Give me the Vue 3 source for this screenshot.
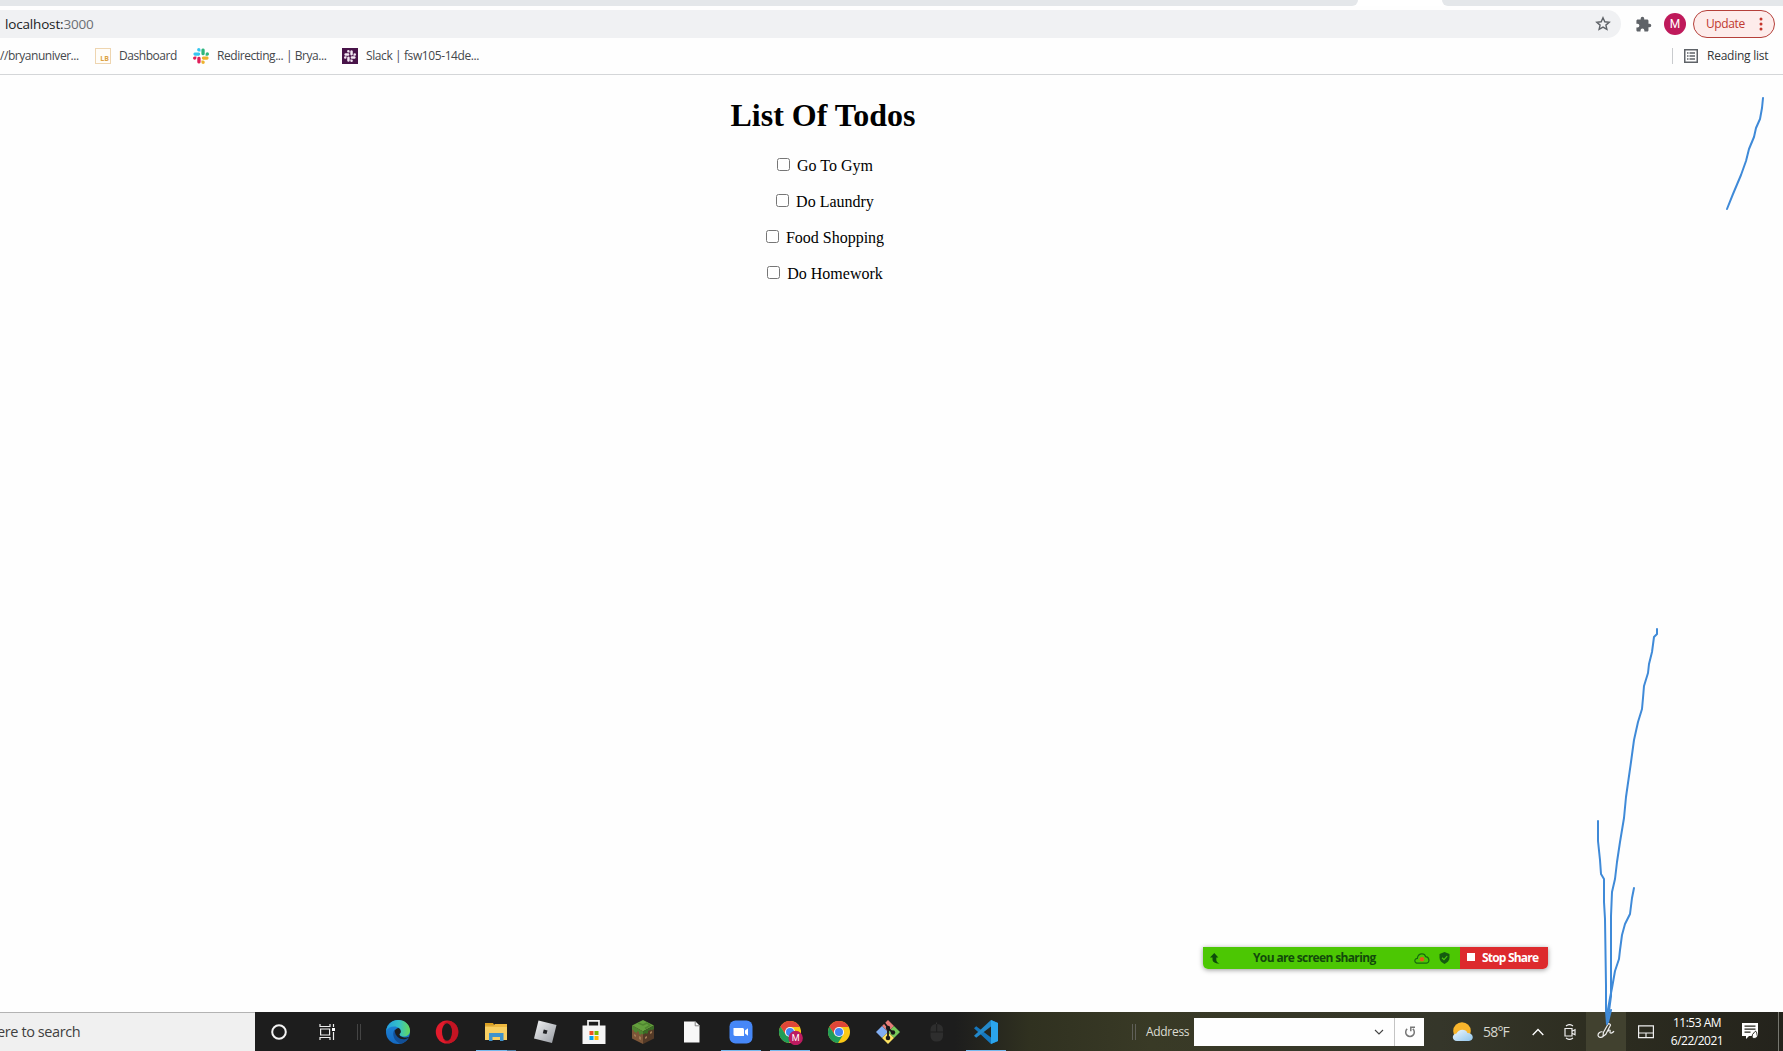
<script setup>
const todos = ['Go To Gym', 'Do Laundry', 'Food Shopping', 'Do Homework']

const apps = [
  { name: 'edge' },
  { name: 'opera' },
  { name: 'explorer', open: true },
  { name: 'roblox' },
  { name: 'store' },
  { name: 'minecraft' },
  { name: 'file' },
  { name: 'zoom', open: true },
  { name: 'chrome-profile', open: true },
  { name: 'chrome' },
  { name: 'git' },
  { name: 'mouse' },
  { name: 'vscode', open: true }
]

const slackShapes = [
  { c: 'a', d: 'M5.8 0a1.7 1.7 0 0 0 0 3.4h1.7V1.7A1.7 1.7 0 0 0 5.8 0zM1.7 4.4h4.2a1.7 1.7 0 0 1 0 3.3H1.7a1.7 1.7 0 0 1 0-3.3z' },
  { c: 'b', d: 'M16 5.9a1.7 1.7 0 0 0-3.4 0v1.8h1.7A1.7 1.7 0 0 0 16 5.9zM11.7 1.7v4.2a1.7 1.7 0 0 1-3.3 0V1.7a1.7 1.7 0 0 1 3.3 0z' },
  { c: 'c', d: 'M10.1 16a1.7 1.7 0 0 0 0-3.4H8.4v1.7A1.7 1.7 0 0 0 10.1 16zM14.3 11.7h-4.2a1.7 1.7 0 0 1 0-3.3h4.2a1.7 1.7 0 0 1 0 3.3z' },
  { c: 'd', d: 'M0 10.1a1.7 1.7 0 0 0 3.4 0V8.4H1.7A1.7 1.7 0 0 0 0 10.1zM4.3 14.3v-4.2a1.7 1.7 0 0 1 3.3 0v4.2a1.7 1.7 0 0 1-3.3 0z' }
]
</script>

<template>
  <div class="screen">
    <div class="tabstrip">
      <div class="tab-rest left"></div>
      <div class="tab-rest right"></div>
    </div>

    <div class="toolbar">
      <div class="omnibox">
        <span class="url">localhost:<span class="port">3000</span></span>
        <svg class="star" width="16" height="16" viewBox="0 0 16 16"><path d="M8 1.8l1.8 4 4.4.4-3.3 2.9 1 4.3L8 11.1l-3.9 2.3 1-4.3-3.3-2.9 4.4-.4z" fill="none" stroke="#5f6368" stroke-width="1.4" /></svg>
      </div>
      <svg class="puzzle" width="17" height="17" viewBox="0 0 24 24"><path fill="#5f6368" d="M20.5 11H19V7c0-1.100-.9-2-2-2h-4V3.500a2.500 2.500 0 0 0-5 0V5H4c-1.100 0-2 .9-2 2v3.800h1.500a2.700 2.700 0 0 1 0 5.400H2V20c0 1.100.9 2 2 2h3.800v-1.500a2.700 2.700 0 0 1 5.400 0V22H17c1.100 0 2-.9 2-2v-4h1.500a2.500 2.500 0 0 0 0-5z" /></svg>
      <div class="avatar">M</div>
      <div class="update"><span>Update</span>
        <svg width="4" height="14" viewBox="0 0 4 14" fill="#c5352b"><circle cx="2" cy="2" r="1.5" /><circle cx="2" cy="7" r="1.500" /><circle cx="2" cy="12" r="1.500" /></svg>
      </div>
    </div>

    <div class="bookmarks">
      <span class="bm b0">//bryanuniver...</span>
      <span class="lb">LB</span>
      <span class="bm b1">Dashboard</span>
      <svg class="slack" width="16" height="16" viewBox="0 0 16 16"><path v-for="s in slackShapes" :key="s.c" :class="'s-' + s.c" :d="s.d" /></svg>
      <span class="bm b2">Redirecting... | Brya...</span>
      <svg class="slack" width="16" height="16" viewBox="0 0 16 16"><path fill="#481349" d="M0 0h16v16H0z" /><g transform="translate(2 2) scale(.75)" fill="#f3e8f3"><path v-for="s in slackShapes" :key="s.c" :d="s.d" /></g></svg>
      <span class="bm b3">Slack | fsw105-14de...</span>
      <div class="reading">
        <svg width="14" height="14" viewBox="0 0 14 14"><path d="M.75.75h12.500v12.500H.75z" fill="none" stroke="#5f6368" stroke-width="1.500" /><path d="M3 4h1.500M3 7h1.500M3 10h1.500M5.500 4H11M5.500 7H11M5.500 10H11" stroke="#5f6368" stroke-width="1.400" /></svg>
        <span>Reading list</span>
      </div>
    </div>

    <main class="page">
      <h1>List Of Todos</h1>
      <div v-for="t in todos" :key="t" class="todo"><input type="checkbox" /> {{ t }}</div>
    </main>

    <div class="share">
      <div class="share-main">
        <svg class="up" width="11" height="11" viewBox="0 0 11 11"><path d="M4.300 0L0 4.500h2.500v1.800C2.500 9 4.500 10.500 9.500 10.500 7 9.500 6.300 8.300 6.300 6.500v-2h2z" fill="#0d4d0a" /></svg>
        <span class="share-text">You are screen sharing</span>
        <svg class="cloud" width="16" height="11" viewBox="0 0 16 11"><path d="M4 10.200C-.3 10.400.1 5.300 3.400 5.300 4 .1 10.400-.6 11.600 3.700c3.800 0 4.600 6.100.9 6.500z" fill="none" stroke="#176a10" stroke-width="1.200" /><circle cx="8" cy="6.200" r="2.300" fill="#e05a1c" /></svg>
        <svg class="shield" width="11" height="12" viewBox="0 0 11 12"><path d="M5.500 0l5 1.900v3.600c0 3.100-2.200 5.200-5 6.500-2.800-1.300-5-3.400-5-6.500V1.900z" fill="#155b10" /><path d="M3 5.800l2 1.900 3.200-3.500" fill="none" stroke="#4cc70a" stroke-width="1.200" /></svg>
      </div>
      <div class="share-stop"><i></i><span>Stop Share</span></div>
    </div>

    <footer class="taskbar">
      <div class="search"><span>ere to search</span></div>
      <div class="sys">
        <svg width="16" height="16" viewBox="0 0 16 16"><circle cx="8" cy="8" r="6.800" fill="none" stroke="#f4f4f4" stroke-width="2" /></svg>
      </div>
      <div class="sys">
        <svg width="17" height="16" viewBox="0 0 17 16" fill="none" stroke="#eee" stroke-width="1.200"><path d="M1 0v2.500h10V0M1.600 5h9v6h-9zM1 16v-2.500h10V16M14.500 0v3M14.500 8v8" /><path d="M13 4h3v3h-3z" fill="#fff" stroke="none" /></svg>
      </div>
      <i class="grip g1"></i>

      <div class="apps">
        <div v-for="a in apps" :key="a.name" class="app" :class="{ open: a.open, stack: a.name === 'explorer' }">
          <svg width="26" height="26" viewBox="0 0 26 26">
            <g v-if="a.name === 'edge'">
              <defs>
                <linearGradient id="eg" x1="0" y1="0" x2="1" y2="0"><stop offset="0" stop-color="#229fe0" /><stop offset=".55" stop-color="#35c1c6" /><stop offset="1" stop-color="#65d957" /></linearGradient>
                <linearGradient id="eb" x1="0" y1="0" x2="0" y2="1"><stop offset="0" stop-color="#1f88d9" /><stop offset="1" stop-color="#1469c2" /></linearGradient>
              </defs>
              <circle cx="13" cy="13" r="12" fill="url(#eb)" />
              <path d="M1.100 12C2 5.500 7 1 13.300 1 20 1 25 6 25 11.500c0 4-3 6-6.500 6-2.800 0-4.500-1.300-4-2.300.7-.7 1.300-1.600 1.300-2.700 0-2.800-2.800-5-6.500-5-4 0-7 2-8.200 4.500z" fill="url(#eg)" />
              <path d="M9.800 10.500C6.500 14 8.500 22.500 15.500 24.700 19 24 22 21.800 23.700 19c-6 2.500-12.500-.5-13.900-8.500z" fill="#124f96" />
              <path d="M14.400 15.200c.8-.8 1.400-1.600 1.400-2.700 0-1.500-.8-2.600-2-3.500-2 0-3.600 1.400-4 3 .4 5.500 5.200 8.700 9.700 8.200 2-.3 3.600-.9 4.300-1.700.2-.5-.2-.8-.6-.6-3.200 1.300-8.600.1-8.800-2.700z" fill="#1d1d1d" />
            </g>
            <g v-else-if="a.name === 'opera'">
              <ellipse cx="13" cy="13" rx="11.200" ry="11.500" fill="#e21b2c" /><path d="M17 2.300c10 3.500 10 18 0 21.400-3 1-6-.5-7.500-2.700C20 21 20 5 9.500 5 11 2.700 14 1.300 17 2.300z" fill="#b8111f" opacity=".7" /><ellipse cx="13" cy="13" rx="5" ry="8.700" fill="#1d1d1d" />
            </g>
            <g v-else-if="a.name === 'explorer'">
              <path d="M2 4h8l1.500 2.500H2z" fill="#dca01f" /><path d="M2 6.500h22V21H2z" fill="#f8cf62" /><path d="M2 6.500h8.500L12 5h12v3H2z" fill="#eeb83f" /><path d="M6 14h14.500v8H17v-4H9.500v4H6z" fill="#4093cb" />
            </g>
            <g v-else-if="a.name === 'roblox'">
              <defs><linearGradient id="rb" x1="0" y1="0" x2="1" y2="1"><stop offset="0" stop-color="#f4f5f6" /><stop offset="1" stop-color="#9599a0" /></linearGradient></defs>
              <path d="M6.500 1.500L24.500 6l-4.500 18L2 19.500z" fill="url(#rb)" /><path d="M11.800 10.500l3.700.9-1 3.700-3.700-.9z" fill="#202124" />
            </g>
            <g v-else-if="a.name === 'store'">
              <path d="M7 7V1.800h11V7" fill="none" stroke="#f4f4f4" stroke-width="1.700" /><path d="M1.500 6.500h23V25h-23z" fill="#f5f5f5" /><path d="M8.500 12h4v4h-4z" fill="#ef5022" /><path d="M13.500 12h4v4h-4z" fill="#7bb900" /><path d="M8.500 17h4v4h-4z" fill="#04a2ec" /><path d="M13.500 17h4v4h-4z" fill="#fdb900" />
            </g>
            <g v-else-if="a.name === 'minecraft'">
              <path d="M13 1l11 5.500-11 6-11-6z" fill="#63a03d" /><path d="M8 4l5 2 4-2 3 2.500-5 3" stroke="#4f8630" stroke-width="1.500" fill="none" /><path d="M2 6.500l11 6V25L2 19.500z" fill="#7d5638" /><path d="M24 6.500l-11 6V25l11-5.500z" fill="#543a27" /><path d="M2 6.500l11 6v3l-2-1v1.500l-2-1v-2l-2-1v2l-3-1.500v-1l-2-1z" fill="#4e8731" /><path d="M24 6.500l-11 6v3l3-1.500v1l2-1v-2l3-1.500v1l3-1.500z" fill="#3a6d25" /><path d="M4 15l2 1v2l-2-1zM9 17l2 1v3l-2-1zM15 18l2-1v2l-2 1zM20 13l2-1v2l-2 1z" fill="#a37b55" />
            </g>
            <g v-else-if="a.name === 'file'">
              <path d="M5 2.500h11.500L20.500 6.500V23.500H5z" fill="#f8f8f8" /><path d="M16.200 2.500v4.300h4.300" fill="none" stroke="#777" stroke-width=".9" />
            </g>
            <g v-else-if="a.name === 'zoom'">
              <rect x="1.500" y="1.500" width="23" height="23" rx="6" fill="#4687f7" /><path d="M5.500 9h8.800c1.100 0 1.700.7 1.700 1.700V17H7.200C6 17 5.500 16.300 5.500 15.300zM17 11.400l3-2.200v7.600l-3-2.200z" fill="#fff" />
            </g>
            <g v-else-if="a.name === 'chrome' || a.name === 'chrome-profile'">
              <circle cx="13" cy="13" r="11" fill="#fbc916" />
              <path d="M13 13V8h9.800A11 11 0 0 0 3.400 7.600L8.600 15.600z" fill="#df4638" />
              <path d="M3.400 7.600A11 11 0 0 0 12 24l5-8-8.400-.4z" fill="#209d58" />
              <circle cx="13" cy="13" r="5.100" fill="#f6f6f6" /><circle cx="13" cy="13" r="4" fill="#4285f4" />
              <g v-if="a.name === 'chrome-profile'"><circle cx="18.700" cy="19" r="7.200" fill="#bd1b60" /><text x="18.700" y="22.100" class="badge">M</text></g>
            </g>
            <g v-else-if="a.name === 'git'">
              <path d="M13 1l6 6-6 6-6-6z" fill="#e67c78" /><path d="M7 7l6 6-6 6-6-6z" fill="#82aef2" /><path d="M19 7l6 6-6 6-6-6z" fill="#76c95a" /><path d="M13 13l6 6-6 6-6-6z" fill="#fbe161" /><path d="M9 3.500l4 5V20M13 9.500l5 4" stroke="#191919" stroke-width="1.800" fill="none" /><g fill="#191919"><circle cx="13" cy="9" r="2.200" /><circle cx="18" cy="13.500" r="2.200" /><circle cx="13" cy="19" r="2.300" /></g>
            </g>
            <g v-else-if="a.name === 'mouse'">
              <path d="M12.500 3.500v3" stroke="#343434" /><rect x="6.500" y="5" width="12.500" height="17.500" rx="5.500" fill="#2e2e2e" /><path d="M6.500 13h12.500M12.700 5v8" stroke="#1d1d1d" stroke-width="1" />
            </g>
            <g v-else>
              <path d="M18 1l7 3v18l-7 3L1 9.300l2.200-2L18 18.500z" fill="#1577bd" /><path d="M18 1v6.500L3.200 18.700 1 16.800z" fill="#2489ca" /><path d="M18 1l7 3v18l-7 3z" fill="#2ba5ec" />
            </g>
          </svg>
        </div>
      </div>

      <i class="grip g2"></i>
      <span class="addr-label">Address</span>
      <div class="addr">
        <div class="addr-field"><svg width="10" height="6" viewBox="0 0 10 6"><path d="M1 1l4 4 4-4" fill="none" stroke="#444" stroke-width="1.100" /></svg></div>
        <div class="addr-go"><svg width="12" height="12" viewBox="0 0 12 12" fill="none" stroke="#777" stroke-width="1.500"><path d="M3.200 2.900A4.300 4.300 0 1 0 8.800 2.900M1 1.200h4.200v4" transform="matrix(-1 0 0 1 12 0)" /></svg></div>
      </div>
      <div class="tray">
        <svg class="weather" width="22" height="20" viewBox="0 0 22 20"><defs><linearGradient id="cl" x1="0" y1="0" x2="1" y2="1"><stop offset="0" stop-color="#f0f7fd" /><stop offset="1" stop-color="#8fc5ec" /></linearGradient></defs><circle cx="10" cy="9" r="8.800" fill="#f8b52c" /><path d="M5 19C-.5 19-.5 12 4.500 11.500 6.500 6.500 14 6.500 15.500 11 22 10.500 22.500 19 17 19z" fill="url(#cl)" /></svg>
        <span class="temp">58°F</span>
        <svg class="caret" width="12" height="8" viewBox="0 0 12 8"><path d="M.7 7L6 1.500 11.300 7" fill="none" stroke="#fff" stroke-width="1.300" /></svg>
        <svg class="cam" width="12" height="16" viewBox="0 0 12 16" fill="none" stroke="#eee" stroke-width="1.200"><path d="M2 1.900c2-1.500 5-1.500 7 0M2 14.100c2 1.500 5 1.500 7 0M1 4.500h7v7.500H1zM8 7.300l3-1.500v5L8 9.300" /></svg>
        <div class="pen">
          <svg width="18" height="17" viewBox="0 0 18 17" fill="none" stroke="#eee" stroke-width="1.200"><path d="M6 13.500l.4-4L11 1.300c.8-1.200 3-.1 2.300 1.300L8.800 11.300zM5.500 8.800C2.800 8.500.9 10.500 1 12.300c.1 2.400 3.400 2.800 5 1.200M11 8.500c1.500-2.500 2.500-1.500 2 .3-.4 2 2.500 1.500 4-.6" /></svg>
        </div>
        <svg class="pad" width="16" height="14" viewBox="0 0 16 14" fill="none" stroke="#eee" stroke-width="1.200"><path d="M.6.9h14.800v11.800H.6zM.6 8h14.800M8 8v4.700" /></svg>
        <div class="clock"><span>11:53 AM</span><span>6/22/2021</span></div>
        <svg class="note" width="17" height="17" viewBox="0 0 17 17"><path d="M0 0h16v13H7l-3 3v-3H0z" fill="#fff" /><path d="M2.500 3.200h11M2.500 6.200h11M2.500 9.200h6" stroke="#25251c" stroke-width="1.200" /><path d="M10.500 11.500l2.500-3c2-1 1.500 3 2.500 4.500 0 2.500-5 3.500-5.500 1z" fill="#fff" stroke="#25251c" stroke-width="1" /></svg>
        <i class="peek"></i>
      </div>
    </footer>

    <svg class="ink" width="1783" height="1051" viewBox="0 0 1783 1051">
      <path d="M1763 98l-1 10-2 11-4 9-2 9-5 12-3 12-5 14-8 19-6 15" />
      <path d="M1657 629v5l-3 3-2 15-3 12-1 9-4 13-1 12-1 11-4 13-4 18-3 22-5 35-2 21-4 24-3 20-2 17-3 13-1 24v80l-2 15-2 10" />
      <path d="M1598 821v20l2 19 1 14 3 5v23l1 17 1 67v25l1 13" />
      <path d="M1634 888l-2 10-2 16-5 10-3 11-2 15-1 9-4 12-3 17-2 10-3 17" />
      <path d="M1607 1011l1 11 3-12" />
    </svg>
  </div>
</template>

<style>
body { margin: 0; overflow: hidden; }
</style>

<style scoped>
* { box-sizing: border-box; }
.screen { position: relative; width: 1783px; height: 1051px; display: flex; flex-direction: column; background: #fefefe; font-family: "Open Sans", "Noto Sans", sans-serif; white-space: nowrap; overflow: hidden; }
svg { display: block; flex: none; }
.tabstrip { display: flex; justify-content: space-between; height: 6px; flex: none; background: #fff; }
.tab-rest { background: #e4e7ea; }
.tab-rest.left { width: 1358px; border-bottom-right-radius: 7px; }
.tab-rest.right { width: 341px; border-bottom-left-radius: 7px; }
.toolbar { display: flex; align-items: center; height: 36px; flex: none; }
.omnibox { display: flex; align-items: center; justify-content: space-between; width: 1621px; height: 28px; padding: 0 10px 0 5px; border-radius: 0 14px 14px 0; background: #f0f1f3; }
.url { font-size: 13.500px; letter-spacing: -.17px; color: #202124; }
.port { color: #6b6f73; }
.puzzle { margin-left: 14px; }
.avatar { width: 22px; height: 22px; margin-left: 12px; border-radius: 50%; background: #bf1a5b; color: #fff; font: 12px/22px Roboto, sans-serif; text-align: center; }
.update { display: flex; align-items: center; justify-content: space-between; width: 82px; height: 28px; margin-left: 7px; padding: 0 11px 1px 12px; border: 1px solid #b5403a; border-radius: 14px; background: #fdeceb; color: #c0392f; font-size: 12px; letter-spacing: -.4px; }
.bookmarks { display: flex; align-items: center; height: 33px; flex: none; padding-bottom: 5px; border-bottom: 1px solid #d4d6d8; font-size: 12px; color: #45484c; }
.bm { flex: none; letter-spacing: -.45px; }
.b0 { width: 95px; }
.b1 { width: 74px; }
.b2 { width: 125px; }
.b3 { width: 113px; letter-spacing: -.4px; }
.lb { width: 16px; height: 16px; margin-right: 8px; border: 1px solid #eed5b0; background: #fffdf9; color: #dda343; font: bold 7px/20px "Open Sans", sans-serif; text-align: right; padding-right: 1px; flex: none; }
.slack { margin-right: 8px; }
.s-a { fill: #36c5f0; } .s-b { fill: #2eb67d; } .s-c { fill: #ecb22e; } .s-d { fill: #e01e5a; }
.reading { display: flex; align-items: center; height: 16px; margin-left: auto; margin-right: 14px; padding-left: 11px; border-left: 1px solid #c9cbce; color: #34373a; }
.reading span { margin-left: 9px; width: 62px; letter-spacing: -.25px; }
.page { flex: 1; width: 1646px; text-align: center; font-family: "Liberation Serif", serif; font-size: 16px; color: #000; }
.page h1 { margin: 22px 0 19px; font-size: 32px; line-height: 37px; }
.todo { height: 36px; line-height: 26px; }
.todo input { margin: 3px 3px 3px 4px; }
.share { position: absolute; left: 1203px; top: 947px; display: flex; width: 345px; height: 22px; border-radius: 0 0 5px 5px; overflow: hidden; box-shadow: 0 1px 5px rgba(0, 0, 0, .4); font-weight: 700; font-size: 12px; }
.share-main { display: flex; align-items: center; width: 257px; padding-left: 7px; background: #4cc703; color: #124a0b; }
.share-text { width: 125px; margin-left: 32px; letter-spacing: -.63px; padding-bottom: 1px; }
.cloud { margin-left: 36px; }
.shield { margin-left: 9px; }
.share-stop { display: flex; align-items: center; flex: 1; padding: 0 0 2px 7px; background: #dd2a2d; color: #fff; }
.share-stop i { width: 8px; height: 8px; margin-right: 7px; background: #fff; }
.share-stop span { letter-spacing: -.8px; }
.taskbar { display: flex; align-items: center; height: 39px; flex: none; background: linear-gradient(90deg, #1d1d1d 0 955px, #303120 1030px, #393a26 1150px, #35362a 1440px, #2d2d20 1600px, #24231c 1783px); color: #f2f2f2; }
.search { display: flex; align-items: center; width: 255px; height: 39px; border-top: 1px solid #b3b3b3; background: #f0f0f0; color: #404040; font-size: 14.500px; }
.search span { letter-spacing: -.4px; margin-left: -3px; padding-bottom: 1px; }
.sys { display: flex; justify-content: center; width: 48px; }
.sys + .sys { width: 49px; }
.grip { width: 4px; height: 16px; border-left: 1px solid #5f5f58; border-right: 1px solid #5f5f58; flex: none; }
.g1 { margin-left: 5px; border-color: #444; }
.apps { display: flex; width: 637px; margin-left: 12px; height: 39px; }
.app { display: flex; justify-content: center; align-items: center; width: 49px; flex: none; height: 39px; position: relative; }
.app.open::after { content: ""; position: absolute; left: 5px; bottom: 0; width: 40px; height: 1px; background: #76b9ed; }
.app.stack::after { background: linear-gradient(90deg, #76b9ed 31px, #4c7ea5 31px); }
.badge { fill: #fff; font: 9px Roboto, sans-serif; text-anchor: middle; }
.g2 { margin-left: 122px; }
.addr-label { width: 48px; margin-left: 10px; font-size: 12px; letter-spacing: -.3px; color: #dcdcd2; }
.addr { display: flex; width: 230px; height: 28px; background: #fefefe; }
.addr-field { display: flex; align-items: center; justify-content: flex-end; width: 201px; padding-right: 10px; border-right: 1px solid #c4c4c4; }
.addr-go { display: flex; flex: 1; align-items: center; justify-content: center; }
.tray { display: flex; align-items: center; flex: 1; height: 39px; }
.weather { margin-left: 28px; }
.temp { width: 49px; margin-left: 9px; font-size: 14px; letter-spacing: -.8px; color: #d7d7d0; }
.cam { margin-left: 20px; }
.pen { display: flex; justify-content: center; align-items: center; width: 40px; height: 39px; margin-left: 10px; background: #41412f; }
.pad { margin-left: 12px; }
.clock { display: flex; flex-direction: column; align-items: center; width: 60px; margin-left: 13px; font-size: 12px; line-height: 18px; letter-spacing: -.5px; color: #fff; }
.note { margin-left: 15px; }
.peek { width: 1px; height: 39px; margin-left: 19px; background: #77776f; }
.ink { position: absolute; left: 0; top: 0; pointer-events: none; }
.ink path { fill: none; stroke: #3f8ad8; stroke-width: 2; stroke-linecap: round; stroke-linejoin: round; }
</style>
